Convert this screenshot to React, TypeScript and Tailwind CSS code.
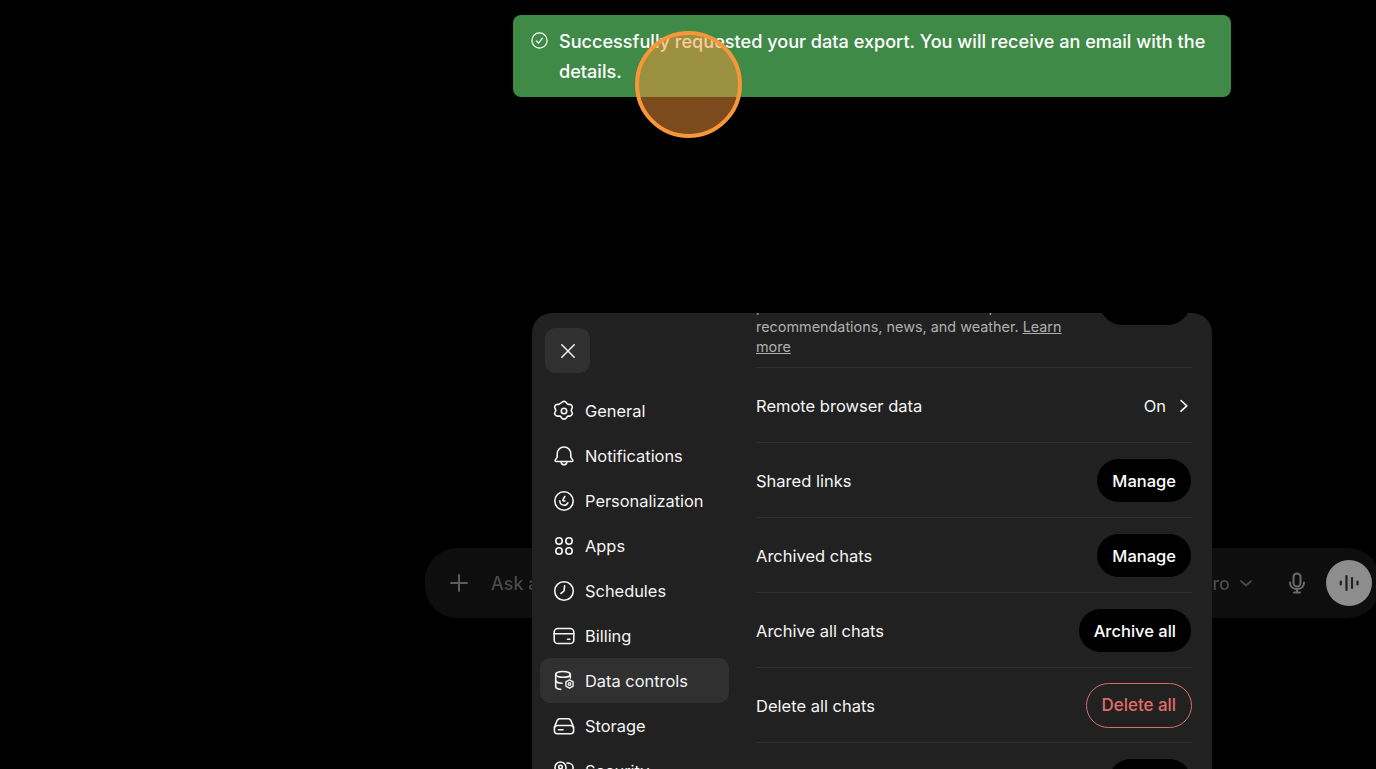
import React from "react";

const font = { fontFamily: "Inter, 'Liberation Sans', sans-serif" };

function Ic({ children, w = 24 }: { children: React.ReactNode; w?: number }) {
  return (
    <svg width={w} height={w} viewBox="0 0 24 24" fill="none" stroke="currentColor" strokeWidth="1.600" strokeLinecap="round" strokeLinejoin="round" className="shrink-0">
      {children}
    </svg>
  );
}

const icons: Record<string, React.ReactNode> = {
  General: (
    <>
      <path d="M9.600 3.600c.5-.9 1.300-1.200 2.400-1.200s1.900.3 2.400 1.200l.7 1.100c.3.500.8.700 1.300.7h1.300c1 0 1.800.5 2.300 1.400s.5 1.800 0 2.600l-.6 1.100c-.3.500-.3 1 0 1.500l.6 1.100c.5.800.5 1.700 0 2.600s-1.300 1.400-2.300 1.400h-1.300c-.5 0-1 .2-1.300.7l-.7 1.100c-.5.900-1.300 1.200-2.400 1.200s-1.900-.3-2.400-1.200l-.7-1.100c-.3-.5-.8-.7-1.300-.7H5.300c-1 0-1.800-.5-2.300-1.400s-.5-1.800 0-2.600l.6-1.100c.3-.5.3-1 0-1.500L3 9.400c-.5-.8-.5-1.700 0-2.600s1.300-1.400 2.300-1.400h1.300c.5 0 1-.2 1.300-.7z" />
      <circle cx="12" cy="12" r="2.700" />
    </>
  ),
  Notifications: (
    <>
      <path d="M12 3c-4 0-6.800 3-6.800 6.800v2.700c0 1-.5 1.700-1.200 2.500-.6.700-.9 1-.9 1.500 0 .6.500 1 1.200 1h15.400c.7 0 1.200-.4 1.200-1 0-.5-.3-.8-.9-1.500-.7-.8-1.200-1.500-1.200-2.500V9.800C18.800 6 16 3 12 3z" />
      <path d="M9.200 18.500c.4 1.500 1.500 2.300 2.800 2.300s2.400-.8 2.800-2.300" />
    </>
  ),
  Personalization: (
    <>
      <circle cx="12" cy="12" r="9.200" />
      <path d="M12.800 7.500l-1.900 3.300c-.3.600.1 1.200.7 1.200h1.400" />
      <path d="M7.800 11.800c0 2.600 1.900 4.400 4.200 4.400 1.700 0 3.100-.9 3.800-2.400" />
    </>
  ),
  Apps: (
    <>
      <circle cx="7" cy="7" r="3.200" />
      <circle cx="17" cy="7" r="3.200" />
      <circle cx="7" cy="17" r="3.200" />
      <circle cx="17" cy="17" r="3.200" />
    </>
  ),
  Schedules: (
    <>
      <circle cx="12" cy="12" r="9.300" />
      <path d="M12.600 6.800l-.6 5.200-3 2.400" />
    </>
  ),
  Billing: (
    <>
      <rect x="2.200" y="4.500" width="19.600" height="15" rx="3.600" />
      <path d="M2.200 9.800h19.600" />
      <path d="M15.500 15.300h2.400" />
    </>
  ),
  "Data controls": (
    <>
      <ellipse cx="11" cy="5.400" rx="7.300" ry="2.900" />
      <path d="M3.700 5.400v12.200c0 1.500 1.700 2.500 5 2.800" />
      <path d="M18.300 5.400v3.600" />
      <path d="M3.700 11.500c.5 1.600 3 2.700 6.300 2.800" />
      <path d="M17.500 10.800l3.600 2v4.300l-3.600 2.100-3.600-2.100v-4.300z" strokeWidth="1.400" />
      <circle cx="17.500" cy="15" r="1.300" strokeWidth="1.300" />
    </>
  ),
  Storage: (
    <>
      <path d="M2.400 13.400l2.400-6.200c.5-1.500 1.700-2.400 3.200-2.400h8c1.500 0 2.700.9 3.200 2.400l2.400 6.200" />
      <rect x="2.400" y="11.500" width="19.200" height="8.300" rx="3" />
      <path d="M6.500 15.700h4.500" />
    </>
  ),
  Security: (
    <>
      <circle cx="8.500" cy="8.500" r="5.500" />
      <circle cx="8.500" cy="8" r="1.800" />
      <path d="M15 4c3 0 6 1.500 6 4v6c0 3-2 5-5 7" />
    </>
  ),
};

const nav = ["General", "Notifications", "Personalization", "Apps", "Schedules", "Billing", "Data controls", "Storage", "Security"];

function Pill({ label, danger }: { label: string; danger?: boolean }) {
  return danger ? (
    <button className="-mr-[1px] h-[45px] rounded-full border border-[#d96c6c] px-[15px] pt-[1px] text-[16.9px] font-medium text-[#e06c6a]">{label}</button>
  ) : (
    <button className="h-[43px] rounded-full bg-black px-[15px] pt-[1px] text-[16.5px] font-medium text-white">{label}</button>
  );
}

function Row({ label, children }: { label: string; children: React.ReactNode }) {
  return (
    <div className="flex h-[75px] shrink-0 items-center justify-between border-b border-[#2f2f2f] pr-[1px] pt-[1px] text-[16.5px] text-[#f5f5f5]">
      <span className="pt-[2px]">{label}</span>
      {children}
    </div>
  );
}

export default function App() {
  return (
    <div style={font} className="relative h-[769px] w-full overflow-hidden bg-black antialiased">
      {/* Dimmed composer behind the dialog */}
      <div className="pl-[425px] pt-[548px]">
        <div className="flex h-[70px] w-[955px] items-center rounded-[32px] bg-[#0e0e0e] pl-[22px] pr-[8px] text-[#4a4a4a] blur-[0.6px]">
          <svg width="24" height="24" viewBox="0 0 24 24" fill="none" stroke="#5c5c5c" strokeWidth="2" strokeLinecap="round"><path d="M12 4v16M4 12h16" /></svg>
          <span className="ml-[20px] text-[18px] font-medium">Ask anything</span>
          <div className="ml-auto flex items-center">
            <span className="text-[18px] font-medium text-[#4a4a4a]">Pro</span>
            <svg className="ml-[8px]" width="16" height="16" viewBox="0 0 16 16" fill="none" stroke="#4a4a4a" strokeWidth="1.800" strokeLinecap="round" strokeLinejoin="round"><path d="M3 6l5 4.500L13 6" /></svg>
            <svg className="ml-[31px]" width="24" height="24" viewBox="0 0 24 24" fill="none" stroke="#6b6b6b" strokeWidth="2" strokeLinecap="round"><rect x="8.500" y="2.500" width="7" height="13" rx="3.500" /><path d="M5 11.500c0 4 3 6.500 7 6.500s7-2.500 7-6.500M12 18v3.500M9 21.500h6" /></svg>
            <div className="ml-[17px] flex h-[46px] w-[46px] items-center justify-center rounded-full bg-[#8d8d8d]">
              <svg width="24" height="24" viewBox="0 0 24 24" fill="none" stroke="#1f1f1f" strokeWidth="2.200" strokeLinecap="round"><path d="M3.800 10.500v3M9.500 5v14M15 7v10M20.500 10.500v3" /></svg>
            </div>
          </div>
        </div>
      </div>

      {/* Settings dialog */}
      <div className="absolute left-[532px] top-[313px] flex h-[480px] w-[680px] overflow-hidden rounded-t-[20px] bg-[#212121]">
        <aside className="w-[208px] shrink-0 pl-[8px]">
          <button className="ml-[5px] mt-[15px] flex h-[45px] w-[45px] items-center justify-center rounded-[10px] bg-[#303030] text-[#ececec]">
            <svg width="20" height="20" viewBox="0 0 20 20" fill="none" stroke="currentColor" strokeWidth="1.600" strokeLinecap="round"><path d="M3.800 3.800l12.400 12.400M16.200 3.800L3.800 16.200" /></svg>
          </button>
          <nav className="mt-[15px] flex flex-col">
            {nav.map((n) => (
              <div
                key={n}
                className={`flex h-[45px] w-[189px] shrink-0 items-center gap-[9px] rounded-[10px] pl-[12px] text-[16.4px] text-[#f5f5f5] ${n === "Data controls" ? "bg-[#303030]" : ""}`}
              >
                <Ic>{icons[n]}</Ic>
                <span className="pt-[2px]">{n}</span>
              </div>
            ))}
          </nav>
        </aside>
        <main className="relative ml-[16px] flex w-[436px] shrink-0 flex-col">
          <div className="flex h-[55px] shrink-0 items-end border-b border-[#2f2f2f] pb-[10px]">
            <p className="w-[320px] whitespace-nowrap text-[14.4px] leading-[20px] text-[#afafaf]">
              provides more local results in chat,
              <br />
              recommendations, news, and weather. <span className="underline">Learn</span>
              <br />
              <span className="underline">more</span>
            </p>
          </div>
          <div className="absolute right-[2px] top-[-32px] h-[44px] w-[90px] rounded-full bg-black" />
          <Row label="Remote browser data">
            <div className="flex items-center gap-[5px]">
              <span className="pt-[2px]">On</span>
              <svg width="20" height="20" viewBox="0 0 20 20" fill="none" stroke="currentColor" strokeWidth="1.600" strokeLinecap="round" strokeLinejoin="round"><path d="M10 4.500l5.800 5.300L10 15.100" /></svg>
            </div>
          </Row>
          <Row label="Shared links"><Pill label="Manage" /></Row>
          <Row label="Archived chats"><Pill label="Manage" /></Row>
          <Row label="Archive all chats"><Pill label="Archive all" /></Row>
          <Row label="Delete all chats"><Pill label="Delete all" danger /></Row>
          <Row label="Export data"><Pill label="Export" /></Row>
        </main>
      </div>

      {/* Toast */}
      <div className="absolute left-[513px] top-[15px] flex h-[82px] w-[718px] items-start gap-[11px] rounded-[8px] bg-[#3f8a46] pl-[18px] pr-[20px] pt-[11px] text-[18.1px] font-medium leading-[30px] text-white">
        <svg className="mt-[6px] shrink-0" width="17" height="17" viewBox="0 0 17 17" fill="none" stroke="currentColor" strokeWidth="1.200" strokeLinecap="round" strokeLinejoin="round"><circle cx="8.500" cy="8.500" r="7.600" /><path d="M5.300 8.800l2.200 2.200 4-4.800" /></svg>
        <span>Successfully requested your data export. You will receive an email with the details.</span>
      </div>

      {/* Click highlight */}
      <div className="absolute left-[635px] top-[31px] h-[107px] w-[107px] rounded-full border-[4px] border-[#f8963a] bg-[#f8963a80]" />
    </div>
  );
}
